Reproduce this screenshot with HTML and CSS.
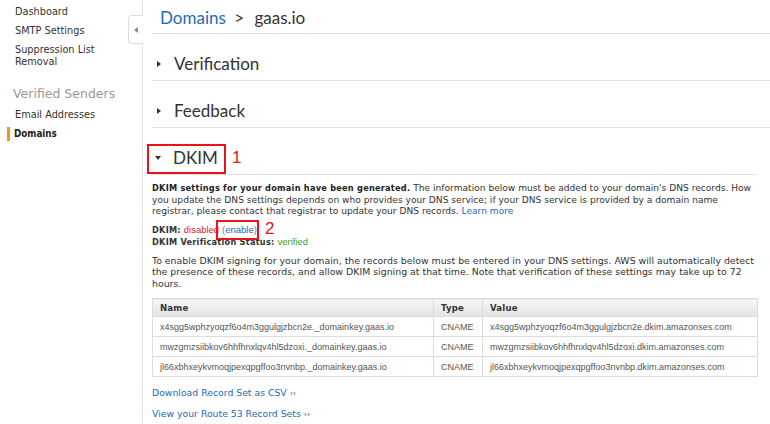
FILE: index.html
```
<!DOCTYPE html>
<html>
<head>
<meta charset="utf-8">
<link rel="stylesheet" href="styles.css">
</head>
<body>
<div class="page">
  <aside class="sidebar">
    <ul class="nav">
      <li>Dashboard</li>
      <li>SMTP Settings</li>
      <li>Suppression List<br>Removal</li>
    </ul>
    <div class="nav-heading">Verified Senders</div>
    <ul class="nav">
      <li>Email Addresses</li>
      <li class="active">Domains</li>
    </ul>
    <div class="collapse-tab"><span class="tri-left"></span></div>
  </aside>
  <main class="main">
    <div class="crumb"><a class="link" href="#">Domains</a> <span class="sep">&gt;</span> gaas.io</div>
    <div class="section-head wide"><span class="tri-right"></span>Verification</div>
    <div class="section-head wide"><span class="tri-right"></span>Feedback</div>
    <div class="section-head dkim-head">
      <span class="tri-down"></span>DKIM
      <span class="anno-box box1"></span><span class="anno-num num1">1</span>
    </div>
    <div class="dkim-body">
      <p class="txt"><b>DKIM settings for your domain have been generated.</b> The information below must be added to your domain's DNS records. How you update the DNS settings depends on who provides your DNS service; if your DNS service is provided by a domain name registrar, please contact that registrar to update your DNS records. <a class="link" href="#">Learn more</a></p>
      <div class="status">
        <div class="status-line"><b>DKIM:</b> <span class="val red">disabled</span> <span class="val enable">(<a class="link" href="#">enable</a>)</span><span class="anno-box box2"></span><span class="anno-num num2">2</span></div>
        <div><b>DKIM Verification Status:</b> <span class="val green">verified</span></div>
      </div>
      <p class="txt txt-2">To enable DKIM signing for your domain, the records below must be entered in your DNS settings. AWS will automatically detect the presence of these records, and allow DKIM signing at that time. Note that verification of these settings may take up to 72 hours.</p>
      <table class="records">
        <thead>
          <tr><th class="c-name">Name</th><th class="c-type">Type</th><th>Value</th></tr>
        </thead>
        <tbody>
          <tr><td>x4sgg5wphzyoqzf6o4m3ggulgjzbcn2e._domainkey.gaas.io</td><td>CNAME</td><td>x4sgg5wphzyoqzf6o4m3ggulgjzbcn2e.dkim.amazonses.com</td></tr>
          <tr><td>mwzgmzsiibkov6hhfhnxlqv4hl5dzoxi._domainkey.gaas.io</td><td>CNAME</td><td>mwzgmzsiibkov6hhfhnxlqv4hl5dzoxi.dkim.amazonses.com</td></tr>
          <tr><td>jl66xbhxeykvmoqjpexqpgffoo3nvnbp._domainkey.gaas.io</td><td>CNAME</td><td>jl66xbhxeykvmoqjpexqpgffoo3nvnbp.dkim.amazonses.com</td></tr>
        </tbody>
      </table>
      <div class="links">
        <a class="link" href="#">Download Record Set as CSV <span class="raq">&rsaquo;&rsaquo;</span></a>
        <a class="link" href="#">View your Route 53 Record Sets <span class="raq">&rsaquo;&rsaquo;</span></a>
      </div>
    </div>
  </main>
</div>
</body>
</html>
```
FILE: styles.css
```
* { box-sizing: border-box; }
html, body { margin: 0; padding: 0; background: #fff; }
body {
  width: 770px;
  height: 424px;
  overflow: hidden;
  font-family: "DejaVu Sans", Verdana, sans-serif;
  font-size: 9.1px;
  color: #333;
}
b { font-stretch: condensed; letter-spacing: 0.25px; }
.page { display: flex; height: 424px; }
.sidebar {
  position: relative;
  width: 143px;
  flex: none;
  border-right: 1px solid #e3e3e3;
  padding-top: 6px;
}
.nav { list-style: none; margin: 0; padding: 0; }
.nav li {
  position: relative;
  padding-left: 15px;
  font-size: 9.75px;
  line-height: 12px;
  margin-bottom: 7px;
  color: #333;
}
.nav li.active { font-weight: bold; color: #222; font-stretch: condensed; padding-left: 14px; }
.nav li.active::before {
  content: "";
  position: absolute;
  left: 7px;
  top: -1px;
  width: 3px;
  height: 14px;
  background: #f7941d;
}
.nav-heading {
  margin: 17px 0 6px 0;
  padding-left: 13px;
  font-size: 12.5px;
  line-height: 18px;
  color: #999;
}
.collapse-tab {
  position: absolute;
  right: -1px;
  top: 15px;
  width: 15px;
  height: 29px;
  background: #fff;
  border: 1px solid #dcdcdc;
  border-right: none;
  border-radius: 4px 0 0 4px;
  display: flex;
  align-items: center;
  justify-content: center;
}
.tri-left {
  width: 0; height: 0;
  border-top: 3px solid transparent;
  border-bottom: 3px solid transparent;
  border-right: 4px solid #888;
}
.main {
  flex: none;
  width: 627px;
  min-width: 0;
  padding: 0 12px 0 9px;
}
.crumb {
  font-family: Lato, "Liberation Sans", sans-serif;
  font-size: 17px;
  line-height: 20px;
  color: #333;
  padding: 8px 0 5px 8px;
  margin-right: -12px;
  border-bottom: 1px solid #e2e2e2;
}
.crumb .sep { margin: 0 6px 0 4px; }
.link { color: #1f6ab5; text-decoration: none; }
.section-head {
  position: relative;
  font-family: Lato, "Liberation Sans", sans-serif;
  font-size: 17px;
  line-height: 20px;
  color: #333;
  padding: 20px 0 6px 5px;
  border-bottom: 1px solid #e2e2e2;
  display: flex;
  align-items: center;
}
.section-head.wide { margin-right: -12px; }
.dkim-head { padding-left: 3px; }
.tri-right {
  width: 0; height: 0;
  border-top: 3.5px solid transparent;
  border-bottom: 3.5px solid transparent;
  border-left: 4px solid #333;
  margin-right: 13px;
}
.tri-down {
  width: 0; height: 0;
  border-left: 3.5px solid transparent;
  border-right: 3.5px solid transparent;
  border-top: 4px solid #333;
  margin-right: 12px;
}
.anno-box {
  position: absolute;
  border: 2px solid #e8141a;
}
.anno-num {
  position: absolute;
  color: #e8141a;
  font-family: "Liberation Sans", sans-serif;
  font-size: 17px;
  line-height: 18px;
}
.box1 { left: -5px; top: 16px; width: 79px; height: 30px; }
.num1 { left: 80px; top: 21px; }
.dkim-body { padding-top: 8px; }
.txt {
  margin: 0;
  line-height: 11.5px;
  color: #333;
}
.txt-2 { font-size: 9.4px; }
.txt b { color: #222; }
.status {
  margin: 6px 0 6px 0;
  line-height: 11.5px;
}
.status-line { position: relative; }
.val { font-family: "Liberation Sans", Arial, sans-serif; font-size: 9.5px; }
.red { color: #e2231a; }
.green { color: #3a9e2f; }
.enable { color: #777; }
.box2 { left: 64px; top: -4px; width: 43px; height: 20px; }
.num2 { left: 113px; top: -4px; }
.records {
  width: 100%;
  margin-top: 9px;
  border-collapse: collapse;
  border: 1px solid #dcdcdc;
  font-family: "Liberation Sans", Arial, sans-serif;
  font-size: 9px;
  color: #555;
}
.records th {
  text-align: left;
  font-family: "DejaVu Sans", Verdana, sans-serif;
  font-weight: bold;
  font-stretch: condensed;
  letter-spacing: 0.2px;
  font-size: 9.5px;
  color: #333;
  height: 18px;
  padding: 0 7px;
  background: linear-gradient(#f7f7f7, #e3e3e3);
  border: 1px solid #dcdcdc;
  border-top: none;
}
.records td {
  height: 20px;
  padding: 0 7px;
  border: 1px solid #dcdcdc;
  white-space: nowrap;
}
.records .c-name { width: 281px; }
.records .c-type { width: 49px; }
.links {
  display: flex;
  flex-direction: column;
  align-items: flex-start;
  gap: 8px;
  margin-top: 10px;
  font-size: 9.3px;
  line-height: 12px;
}
.raq { font-size: 8px; }
```
